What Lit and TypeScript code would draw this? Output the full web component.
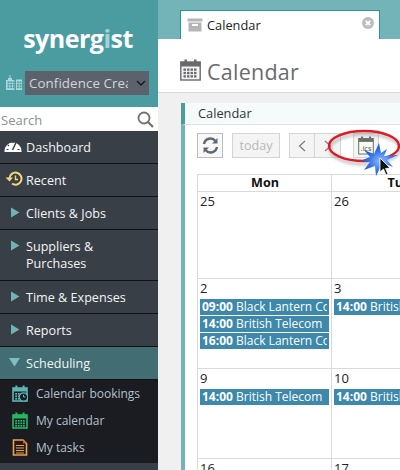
import { LitElement, html, css, svg } from "lit";
import { customElement } from "lit/decorators.js";

const arrow = svg`<svg class="tri" width="9" height="11" viewBox="0 0 9 11"><path d="M0 0.5 L8.5 5.5 L0 10.5Z" fill="#6fb3b5"/></svg>`;
const arrowDown = svg`<svg class="tri" width="11" height="9" viewBox="0 0 11 9"><path d="M0 0 L11 0 L5.5 8.5Z" fill="#7cc0c2"/></svg>`;

const calIcon = (c: string, inner: unknown) => svg`<svg class="ico" width="16" height="17" viewBox="0 0 16 17">
<rect x="1" y="3" width="14" height="13" fill="none" stroke="${c}" stroke-width="1.6"/><rect x="1" y="3" width="14" height="3.5" fill="${c}"/>
<rect x="3.4" y="0.5" width="2" height="4" fill="${c}"/><rect x="10.6" y="0.5" width="2" height="4" fill="${c}"/>${inner}</svg>`;

const grid = (c: string, x0: number, y0: number, nx: number, ny: number) => {
  const out: unknown[] = [];
  for (let y = 0; y < ny; y++) for (let x = 0; x < nx; x++) out.push(svg`<rect x="${x0 + x * 2.6}" y="${y0 + y * 2.5}" width="1.8" height="1.7" fill="${c}"/>`);
  return out;
};

@customElement("app-root")
export class AppRoot extends LitElement {
  static styles = css`
    :host { display: block; width: 400px; height: 470px; overflow: hidden; font-family: "Open Sans", sans-serif; position: relative; }
    .app { display: flex; width: 400px; height: 470px; overflow: hidden; }
    .side { width: 158px; flex: none; background: #393f47; display: flex; flex-direction: column; }
    .brand { height: 107px; background: #4a9ca1; display: flex; flex-direction: column; align-items: center; box-sizing: border-box; padding-top: 20px; }
    .logo { color: #fff; font-weight: 700; font-size: 25px; line-height: 36px; letter-spacing: -0.5px; margin-left: -2px; }
    .logo i { font-style: normal; color: #a3d3d6; }
    .org { display: flex; align-self: stretch; align-items: center; margin-top: 15px; padding-left: 6px; gap: 3px; }
    .select { width: 124px; height: 24px; background: #5c626b; color: #d2d6d8; font-size: 13.3px; display: flex; align-items: center; box-sizing: border-box; padding-left: 4px; position: relative; }
    .select span { width: 99px; overflow: hidden; white-space: nowrap; letter-spacing: 0.1px; }
    .select svg { position: absolute; right: 3px; top: 9px; }
    .search { height: 24px; background: #fff; display: flex; align-items: center; justify-content: space-between; padding: 1px 4px 0 1px; box-sizing: border-box; color: #8b8f92; font-size: 13px; }
    .item { display: flex; align-items: flex-start; color: #f2f5f6; font-size: 12.6px; line-height: 17px; padding: 8px 8px 6px 26px; border-bottom: 1px solid #0f1114; position: relative; min-height: 18px; }
    .item.two { min-height: 36px; }
    .item .lead { position: absolute; left: 11px; top: 10px; display: flex; }
    .item .lead.ic { left: 4px; top: 7px; }
    .item .lead.hist { left: 5px; }
    .item.open { background: #416d73; }
    .item.open .lead { left: 9px; top: 11px; }
    .subs { background: #1a1c22; padding: 0 0 2px; display: flex; flex-direction: column; }
    .sub { height: 27px; display: flex; align-items: center; color: #b4c0cc; font-size: 12px; padding-left: 12px; gap: 8px; }
    .sub svg.ico { flex: none; }
    .main { flex: 1; min-width: 0; display: flex; flex-direction: column; background: #f0f0f0; overflow: hidden; }
    .tabs { height: 39px; flex: none; background: #72b4b8; padding: 10px 0 0 22px; box-sizing: border-box; }
    .tab { width: 200px; height: 29px; background: #fff; border: 1px solid #2a9699; border-bottom: 0; box-sizing: border-box; display: flex; align-items: center; gap: 4px; padding: 0 5px 0 6px; color: #222; font-size: 12.8px; position: relative; }
    .tab .x { margin-left: auto; margin-top: -5px; }
    .title { height: 54px; flex: none; background: #fff; border-bottom: 1px solid #d6d8da; box-sizing: border-box; display: flex; align-items: center; padding: 12px 0 0 22px; gap: 6px; color: #6a6a6e; font-size: 21.5px; letter-spacing: 0.25px; }
    .title svg { margin-top: -3px; }
    .content { flex: 1; padding: 10px 0 0 23px; min-height: 0; }
    .panel { width: 400px; height: 100%; background: #fff; }
    .phead { height: 22px; box-sizing: border-box; background: #f5fbfb; border-left: 4px solid #4a9ca1; border-bottom: 1px solid #dfe3e4; padding-left: 13px; color: #333; font-size: 12.8px; line-height: 21px; }
    .pbody { border-left: 4px solid #72b4b8; padding: 8px 0 0 12px; height: 100%; box-sizing: border-box; }
    .tools { display: flex; height: 25px; gap: 9px; }
    .btn { box-sizing: border-box; height: 25px; border: 1px solid #d4d4d4; background: #f4f4f4; display: flex; align-items: center; justify-content: center; color: #b8b8b8; font-size: 12.5px; }
    .sq { width: 26px; background: #f8f8f8; border-color: #bdbdbd; }
    .today { width: 48px; }
    .pair { display: flex; }
    .pair .btn { width: 26px; }
    .pair .btn + .btn { border-left: 0; }
    .pair .gap { width: 12px; }
    .pair .gap + .btn { border-left: 1px solid #d4d4d4; }
    .cal { display: grid; grid-template-columns: 134px 134px 134px; grid-template-rows: 17px 87px 90px 90px 40px; margin-top: 16px; width: 404px; border-left: 1px solid #d9d9d9; border-top: 1px solid #d9d9d9; box-sizing: border-box; }
    .hd { box-sizing: border-box; border-right: 1px solid #d9d9d9; border-bottom: 1px solid #d9d9d9; text-align: center; font-weight: 700; font-size: 12.6px; line-height: 16px; color: #111; padding-left: 1px; }
    .day { box-sizing: border-box; border-right: 1px solid #d9d9d9; border-bottom: 1px solid #d9d9d9; padding: 0 2px; font-size: 13px; line-height: 18px; color: #222; overflow: hidden; display: flex; flex-direction: column; gap: 1px; }
    .num { height: 19px; }
    .ev { height: 16px; background: #3d88ab; border-right: 2px solid #3d88ab; color: #fff; font-size: 12px; line-height: 16px; padding-left: 2px; white-space: nowrap; overflow: hidden; flex: none; }
    .ev b { font-weight: 700; }
    .ev.wide { margin-right: -4px; }
    .overlay { position: absolute; left: 320px; top: 120px; width: 80px; height: 70px; pointer-events: none; }
  `;

  private ev(t: string, n: string, wide = false) {
    return html`<div class="ev ${wide ? "wide" : ""}"><b>${t}</b> ${n}</div>`;
  }

  render() {
    const bookingsInner = svg`${grid("#5fb4b4", 3.2, 8, 3, 3)}<circle cx="11.5" cy="12" r="4.2" fill="#1a1c22" stroke="#5fb4b4" stroke-width="1.2"/><path d="M11.5 9.8V12H13.5" stroke="#5fb4b4" fill="none"/>`;
    return html`
      <div class="app">
        <aside class="side">
          <div class="brand">
            <div class="logo">synerg<i>i</i>st</div>
            <div class="org">
              <svg width="16" height="16" viewBox="0 0 16 16">
                <path d="M0 15V5H2V3H3.5V0H4.5V3H6V5H8.5V15Z M10 15V4.5H16V15Z" fill="#a8d8da"/>
                ${grid("#4a9ca1", 1.6, 6.5, 3, 3)}${grid("#4a9ca1", 11, 6.5, 2, 3)}
              </svg>
              <div class="select"><span>Confidence Creative</span>
                <svg width="10" height="6" viewBox="0 0 10 6"><path d="M1 1L5 5L9 1" fill="none" stroke="#15181c" stroke-width="1.4"/></svg>
              </div>
            </div>
          </div>
          <div class="search">Search
            <svg width="17" height="17" viewBox="0 0 17 17"><circle cx="7" cy="7" r="5.5" fill="none" stroke="#75706b" stroke-width="1.8"/><path d="M11 11L16 16" stroke="#75706b" stroke-width="2.2"/></svg>
          </div>
          <div class="item"><span class="lead ic"><svg width="18" height="15" viewBox="0 0 18 15"><path d="M0.5 13A8.5 8.5 0 0 1 17.5 13V14H0.5Z" fill="#fff"/><path d="M8.5 12L12 4.5" stroke="#393f47" stroke-width="1.5"/><path d="M2.5 11.5H4.5M13.5 11.5H15.5M3.8 7L5 8M9 3V5" stroke="#393f47" stroke-width="1.2"/></svg></span>Dashboard</div>
          <div class="item"><span class="lead ic hist"><svg width="18" height="16" viewBox="0 0 18 16"><path d="M4.5 7.5A6 6 0 1 1 7 12.5" fill="none" stroke="#f5d67b" stroke-width="2"/><path d="M0.5 6.5H8L4.5 10.5Z" fill="#f5d67b"/><path d="M10.5 4.5V8.5H13" fill="none" stroke="#f5d67b" stroke-width="1.4"/></svg></span>Recent</div>
          <div class="item"><span class="lead">${arrow}</span>Clients &amp; Jobs</div>
          <div class="item two"><span class="lead">${arrow}</span>Suppliers &amp;<br />Purchases</div>
          <div class="item"><span class="lead">${arrow}</span>Time &amp; Expenses</div>
          <div class="item"><span class="lead">${arrow}</span>Reports</div>
          <div class="item open"><span class="lead">${arrowDown}</span>Scheduling</div>
          <div class="subs">
            <div class="sub">${calIcon("#5fb4b4", bookingsInner)}Calendar bookings</div>
            <div class="sub">${calIcon("#27b765", grid("#27b765", 3.2, 8, 4, 3))}My calendar</div>
            <div class="sub"><svg class="ico" width="16" height="17" viewBox="0 0 16 17"><path d="M1.5 1H11L14.5 4.5V16H1.5Z" fill="none" stroke="#f0a04b" stroke-width="1.6"/><path d="M11 1L14.5 4.5H11Z" fill="#e8472f"/><path d="M4 6.5H12M4 9H12M4 11.5H12M4 14H12" stroke="#f0a04b" stroke-width="1.2"/></svg>My tasks</div>
          </div>
        </aside>
        <main class="main">
          <div class="tabs">
            <div class="tab">
              <svg width="16" height="14" viewBox="0 0 16 14"><rect x="0.5" y="0.5" width="15" height="3" fill="#b5b5b8"/><path d="M1.5 4.5H14.5V13.5H1.5Z" fill="#b5b5b8"/><rect x="5" y="6" width="6" height="2" fill="#fff"/></svg>
              Calendar
              <svg class="x" width="12" height="12" viewBox="0 0 12 12"><circle cx="6" cy="6" r="6" fill="#bdbdc0"/><path d="M3.8 3.8L8.2 8.2M8.2 3.8L3.8 8.2" stroke="#fff" stroke-width="1.8"/></svg>
            </div>
          </div>
          <div class="title">
            <svg width="21" height="22" viewBox="0 0 21 22"><rect x="0.8" y="3" width="19.4" height="18" fill="#f4f4f4" stroke="#6a6a6e" stroke-width="1.4"/><rect x="0.8" y="3" width="19.4" height="4.5" fill="#6a6a6e"/><rect x="4.5" y="0.5" width="2.5" height="5" fill="#6a6a6e"/><rect x="14" y="0.5" width="2.5" height="5" fill="#6a6a6e"/>
              <g transform="translate(3.5 9.5) scale(1.35)">${grid("#6a6a6e", 0, 0, 4, 3)}</g></svg>
            Calendar
          </div>
          <div class="content">
            <div class="panel">
              <div class="phead">Calendar</div>
              <div class="pbody">
                <div class="tools">
                  <div class="btn sq"><svg width="17" height="17" viewBox="0 0 17 17"><path d="M2 7A6.5 6.5 0 0 1 13.5 4M15 10A6.5 6.5 0 0 1 3.5 13" fill="none" stroke="#5e6a72" stroke-width="2.4"/><path d="M15.5 1V6.5H10ZM1.5 16V10.5H7Z" fill="#5e6a72"/></svg></div>
                  <div class="btn today">today</div>
                  <div class="pair">
                    <div class="btn"><svg width="8" height="12" viewBox="0 0 8 12"><path d="M7 1L1.5 6L7 11" fill="none" stroke="#777" stroke-width="1.1"/></svg></div>
                    <div class="btn"><svg width="8" height="12" viewBox="0 0 8 12"><path d="M1 1L6.5 6L1 11" fill="none" stroke="#777" stroke-width="1.1"/></svg></div>
                    <div class="gap"></div>
                    <div class="btn"><svg width="16" height="19" viewBox="0 0 16 19"><rect x="0.7" y="2.5" width="14.6" height="15.5" fill="#fbfbf6" stroke="#68706a"/><rect x="0.7" y="2.5" width="14.6" height="3.4" fill="#68706a"/><rect x="3" y="0.5" width="2" height="3.6" fill="#68706a"/><rect x="11" y="0.5" width="2" height="3.6" fill="#68706a"/><text x="8" y="15" text-anchor="middle" font-family="Open Sans" font-size="7.5" fill="#4a5258">.ics</text></svg></div>
                  </div>
                </div>
                <div class="cal">
                  <div class="hd">Mon</div><div class="hd">Tue</div><div class="hd">Wed</div>
                  <div class="day"><div class="num">25</div></div><div class="day"><div class="num">26</div></div><div class="day"><div class="num">27</div></div>
                  <div class="day"><div class="num">2</div>${this.ev("09:00", "Black Lantern Communications")}${this.ev("14:00", "British Telecom")}${this.ev("16:00", "Black Lantern Communications")}</div>
                  <div class="day"><div class="num">3</div>${this.ev("14:00", "British Telecom", true)}</div><div class="day"><div class="num">4</div></div>
                  <div class="day"><div class="num">9</div>${this.ev("14:00", "British Telecom")}</div>
                  <div class="day"><div class="num">10</div>${this.ev("14:00", "British Telecom", true)}</div><div class="day"><div class="num">11</div></div>
                  <div class="day"><div class="num">16</div></div><div class="day"><div class="num">17</div></div><div class="day"><div class="num">18</div></div>
                </div>
              </div>
            </div>
          </div>
        </main>
      </div>
      <svg class="overlay" viewBox="0 0 80 70">
        <defs><filter id="sh" x="-30%" y="-30%" width="160%" height="160%"><feGaussianBlur stdDeviation="1.5"/></filter>
        <radialGradient id="st" cx="0.55" cy="0.55" r="0.6"><stop offset="0" stop-color="#8fc0ff"/><stop offset="0.55" stop-color="#2f6fe8"/><stop offset="1" stop-color="#1d4fc4"/></radialGradient></defs>
        <ellipse cx="44" cy="26" rx="35" ry="15" fill="none" stroke="#888" stroke-width="3" filter="url(#sh)" opacity="0.5" transform="translate(1 3)"/>
        <ellipse cx="44" cy="26" rx="35" ry="15" fill="none" stroke="#e01a22" stroke-width="2.4"/>
        <path d="M59 23 L61 33 L67 29 L64 36 L78 35 L67 40 L73 47 L65 44 L67 54 L61 46 L56 56 L55 46 L44 50 L50 42 L40 41 L50 37 L44 30 L54 34Z" fill="url(#st)"/>
        <path d="M60 38 L60 52 L63.5 49 L66 55 L68 54 L65.5 48.5 L70 48Z" fill="#111" stroke="#fff" stroke-width="0.8"/>
      </svg>
    `;
  }
}
